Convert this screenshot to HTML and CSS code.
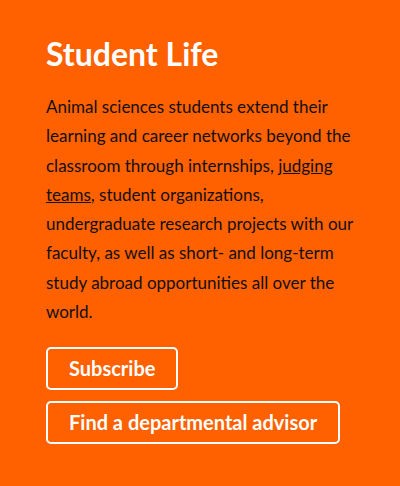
FILE: index.html
```html
<!DOCTYPE html>
<html lang="en">
<head>
<meta charset="utf-8">
<title>Student Life</title>
<link rel="stylesheet" href="styles.css">
</head>
<body>
<section class="panel">
  <h2 class="title">Student Life</h2>
  <p class="text">Animal sciences students extend their learning and career networks beyond the classroom through internships, <a href="#" class="link">judging teams</a>, student organizations, undergraduate research projects with our faculty, as well as short- and long-term study abroad opportunities all over the world.</p>
  <div class="actions">
    <a href="#" class="btn">Subscribe</a>
    <a href="#" class="btn">Find a departmental advisor</a>
  </div>
</section>
</body>
</html>
```
FILE: styles.css
```css
html, body {
  margin: 0;
  padding: 0;
  background: #ff6000;
}
.panel {
  box-sizing: border-box;
  width: 400px;
  height: 486px;
  padding: 34px 46px 0 46px;
  background: #ff6000;
  font-family: Lato, "Liberation Sans", sans-serif;
  color: #111;
}
.title {
  margin: 0 0 18px 0;
  font-size: 32px;
  font-weight: 700;
  line-height: 40px;
  color: #fff;
}
.text {
  margin: 0 0 21px 0;
  font-size: 17px;
  line-height: 29.3px;
}
.link {
  color: #111;
  text-decoration: underline;
}
.actions {
  display: flex;
  flex-direction: column;
  align-items: flex-start;
  gap: 11px;
}
.btn {
  display: inline-block;
  padding: 0 21px;
  height: 43px;
  line-height: 39px;
  box-sizing: border-box;
  border: 2px solid #fff;
  border-radius: 5px;
  color: #fff;
  font-weight: 700;
  font-size: 20px;
  text-decoration: none;
}
```
